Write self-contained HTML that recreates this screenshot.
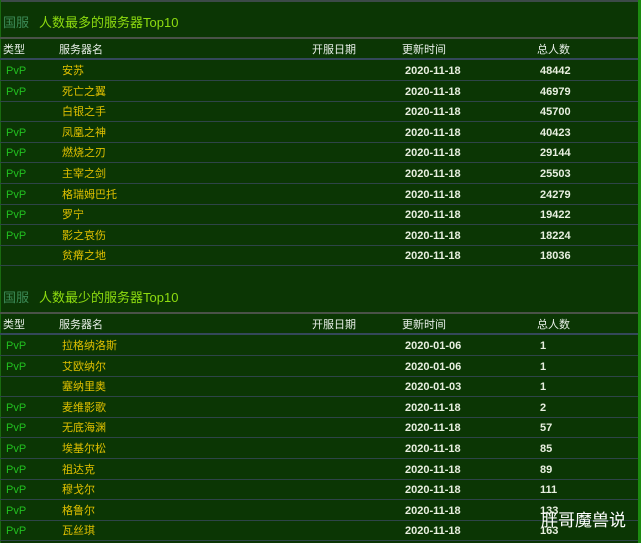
<!DOCTYPE html>
<html><head><meta charset="utf-8"><style>
*{margin:0;padding:0;box-sizing:border-box}
body{width:641px;height:543px;background:#0b3604;position:relative;overflow:hidden;font-family:"Liberation Sans","Noto Sans CJK SC",sans-serif;font-size:11px}
.a{position:absolute;white-space:nowrap;line-height:14px}
.ln{position:absolute;left:0;width:638px;height:1px;background:#2e4448}
.t{font-size:13px;color:#8edc10}
.t span{color:#3c8c58;margin-right:10px}
.h{color:#e8efe8}
.g{color:#22c020}
.y{color:#e0c000}
.w{color:#e8efe0;font-weight:bold}
</style></head><body>
<div style="position:absolute;left:0;top:0;width:638px;height:2px;background:#3c4a48"></div>
<div style="position:absolute;left:638px;top:0;width:3px;height:543px;background:#1c8a10"></div>
<div style="position:absolute;left:0;top:0;width:1px;height:543px;background:#1a6a10"></div>
<div id="c"></div>
<div class="a" style="left:541px;top:511px;font-size:17px;color:#fff;line-height:20px">胖哥魔兽说</div>
<script>
var s1=[["PvP","安苏","2020-11-18","48442"],["PvP","死亡之翼","2020-11-18","46979"],["","白银之手","2020-11-18","45700"],["PvP","凤凰之神","2020-11-18","40423"],["PvP","燃烧之刃","2020-11-18","29144"],["PvP","主宰之剑","2020-11-18","25503"],["PvP","格瑞姆巴托","2020-11-18","24279"],["PvP","罗宁","2020-11-18","19422"],["PvP","影之哀伤","2020-11-18","18224"],["","贫瘠之地","2020-11-18","18036"]];
var s2=[["PvP","拉格纳洛斯","2020-01-06","1"],["PvP","艾欧纳尔","2020-01-06","1"],["","塞纳里奥","2020-01-03","1"],["PvP","麦维影歌","2020-11-18","2"],["PvP","无底海渊","2020-11-18","57"],["PvP","埃基尔松","2020-11-18","85"],["PvP","祖达克","2020-11-18","89"],["PvP","穆戈尔","2020-11-18","111"],["PvP","格鲁尔","2020-11-18","133"],["PvP","瓦丝琪","2020-11-18","163"]];
var h="";
function sec(top,title,rows){
 h+='<div class="a t" style="left:3px;top:'+(top-6)+'px"><span>国服</span>'+title+'</div>';
 h+='<div class="ln" style="top:'+(top+15)+'px;height:2px;background:#4a5248"></div>';
 var hy=top+21;
 h+='<div class="a h" style="left:3px;top:'+hy+'px">类型</div><div class="a h" style="left:59px;top:'+hy+'px">服务器名</div><div class="a h" style="left:312px;top:'+hy+'px">开服日期</div><div class="a h" style="left:402px;top:'+hy+'px">更新时间</div><div class="a h" style="left:537px;top:'+hy+'px">总人数</div>';
 h+='<div class="ln" style="top:'+(top+36)+'px;height:2px;background:#34485a"></div>';
 for(var i=0;i<10;i++){
  var y=top+38+i*20.6, ty=Math.round(y+4);
  var r=rows[i];
  h+='<div class="a g" style="left:6px;top:'+ty+'px">'+r[0]+'</div><div class="a y" style="left:62px;top:'+ty+'px">'+r[1]+'</div><div class="a w" style="left:405px;top:'+ty+'px">'+r[2]+'</div><div class="a w" style="left:540px;top:'+ty+'px">'+r[3]+'</div>';
  h+='<div class="ln" style="top:'+Math.round(y+20)+'px"></div>';
 }
}
sec(22,"人数最多的服务器Top10",s1);
sec(297,"人数最少的服务器Top10",s2);
document.getElementById("c").innerHTML=h;
</script>
</body></html>
